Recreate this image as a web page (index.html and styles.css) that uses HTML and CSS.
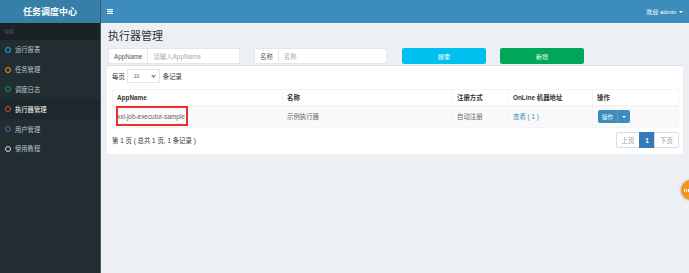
FILE: index.html
```html
<!DOCTYPE html>
<html lang="zh-CN">
<head>
    <meta charset="UTF-8">
    <title>任务调度中心</title>
    <link rel="stylesheet" href="styles.css">
</head>
<body>
    <div class="app">
        <aside class="sidebar">
            <div class="logo">任务调度中心</div>
            <div class="nav-header">导航</div>
            <ul class="menu">
                <li><span class="dot aqua"></span>运行报表</li>
                <li><span class="dot orange"></span>任务管理</li>
                <li><span class="dot green"></span>调度日志</li>
                <li class="active"><span class="dot red"></span>执行器管理</li>
                <li><span class="dot purple"></span>用户管理</li>
                <li><span class="dot gray"></span>使用教程</li>
            </ul>
        </aside>

        <div class="main">
            <header class="navbar">
                <svg class="toggle" width="6" height="5" viewBox="0 0 6 5">
                    <rect x="0" y="0" width="6" height="1.2" fill="#fff"/>
                    <rect x="0" y="1.9" width="6" height="1.2" fill="#fff"/>
                    <rect x="0" y="3.8" width="6" height="1.2" fill="#fff"/>
                </svg>
                <span class="user">欢迎 admin <span class="caret"></span></span>
            </header>

            <section class="content">
                <h1>执行器管理</h1>

                <div class="search-row">
                    <div class="input-group first">
                        <span class="addon">AppName</span>
                        <span class="field">请输入AppName</span>
                    </div>
                    <div class="input-group second">
                        <span class="addon">名称</span>
                        <span class="field">名称</span>
                    </div>
                    <button class="btn btn-search">搜索</button>
                    <button class="btn btn-add">新增</button>
                </div>

                <div class="box">
                    <div class="length">
                        每页
                        <span class="select">10 <span class="chev"></span></span>
                        条记录
                    </div>

                    <table class="grid">
                        <thead>
                            <tr>
                                <th class="c-app">AppName</th>
                                <th class="c-name">名称</th>
                                <th class="c-type">注册方式</th>
                                <th class="c-addr">OnLine 机器地址</th>
                                <th class="c-op">操作</th>
                            </tr>
                        </thead>
                        <tbody>
                            <tr>
                                <td class="app-cell">xxl-job-executor-sample<span class="mark"></span></td>
                                <td>示例执行器</td>
                                <td>自动注册</td>
                                <td><a class="link">查看 ( 1 )</a></td>
                                <td>
                                    <span class="split">
                                        <span class="split-main">操作</span>
                                        <span class="split-caret"><span class="caret"></span></span>
                                    </span>
                                </td>
                            </tr>
                        </tbody>
                    </table>

                    <div class="footer">
                        <span class="info">第 1 页 ( 总共 1 页, 1 条记录 )</span>
                        <ul class="pager">
                            <li>上页</li>
                            <li class="current">1</li>
                            <li>下页</li>
                        </ul>
                    </div>
                </div>
            </section>
        </div>
    </div>

    <div class="float-chat">
        <svg width="6" height="3" viewBox="0 0 6 3">
            <rect x="0" y="0" width="1" height="3" fill="#fff"/>
            <rect x="2" y="0" width="1" height="3" fill="#fff"/>
            <rect x="4" y="0" width="1" height="3" fill="#fff"/>
        </svg>
    </div>
</body>
</html>
```

FILE: styles.css
```css
* {
    box-sizing: border-box;
    margin: 0;
    padding: 0;
}

body {
    width: 689px;
    height: 273px;
    overflow: hidden;
    background: #ecf0f5;
    font-family: "Liberation Sans", "Noto Sans CJK SC", sans-serif;
    font-size: 6.4px;
    color: #333;
    position: relative;
}

.app {
    display: flex;
    height: 273px;
}

/* sidebar */
.sidebar {
    width: 101px;
    flex-shrink: 0;
    background: #222d32;
    border-right: 1px solid #4a5358;
}

.logo {
    height: 23px;
    background: #367fa9;
    color: #fff;
    font-size: 9px;
    font-weight: bold;
    display: flex;
    align-items: center;
    justify-content: center;
}

.nav-header {
    height: 17px;
    line-height: 17px;
    background: #1a2226;
    color: #4b646f;
    font-size: 5px;
    padding-left: 4px;
}

.menu {
    list-style: none;
}

.menu li {
    height: 19.8px;
    display: flex;
    align-items: center;
    gap: 4px;
    padding-left: 5px;
    color: #b8c7ce;
    font-size: 6.3px;
}

.menu li.active {
    background: #1e282c;
    color: #fff;
}

.dot {
    width: 6px;
    height: 6px;
    border: 1.4px solid;
    border-radius: 50%;
}

.aqua { border-color: #00c0ef; }
.orange { border-color: #f39c12; }
.green { border-color: #00a65a; }
.red { border-color: #dd4b39; }
.purple { border-color: #605ca8; }
.gray { border-color: #d2d6de; }

/* main */
.main {
    flex: 1;
    display: flex;
    flex-direction: column;
}

.navbar {
    height: 23px;
    background: #3c8dbc;
    display: flex;
    align-items: center;
    justify-content: space-between;
    padding: 0 7px 0 6px;
    color: #fff;
}

.user {
    font-size: 6px;
}

.caret {
    display: inline-block;
    width: 0;
    height: 0;
    border-left: 2px solid transparent;
    border-right: 2px solid transparent;
    border-top: 2px solid #fff;
    vertical-align: middle;
    margin-left: 1px;
}

.content {
    padding: 6px 7px 0 6px;
}

h1 {
    font-size: 11px;
    font-weight: normal;
    line-height: 15px;
    color: #333;
    padding-left: 1px;
}

/* search */
.search-row {
    display: flex;
    height: 16px;
    margin-top: 4px;
}

.input-group {
    display: flex;
    background: #fff;
    border: 1px solid #e3e6eb;
}

.input-group.first {
    width: 132px;
    margin-left: 1px;
}

.input-group.second {
    width: 133px;
    margin-left: 14px;
}

.addon {
    display: flex;
    align-items: center;
    padding: 0 5px;
    border-right: 1px solid #e3e6eb;
    color: #555;
}

.field {
    display: flex;
    align-items: center;
    padding-left: 5px;
    color: #aaa;
}

.btn {
    width: 84px;
    border: none;
    border-radius: 2px;
    color: #fff;
    font-family: inherit;
    font-size: 6.2px;
}

.btn-search {
    background: #00c0ef;
    margin-left: 15px;
}

.btn-add {
    background: #00a65a;
    margin-left: 14px;
}

/* box */
.box {
    margin-top: 1px;
    background: #fff;
    border-top: 1px solid #dde1e6;
    padding: 3px 4px 6px 5px;
}

.length {
    display: flex;
    align-items: center;
    height: 14px;
    color: #333;
}

.select {
    width: 33px;
    height: 14px;
    margin: 0 3px 0 2px;
    border: 1px solid #e3e6eb;
    display: flex;
    align-items: center;
    justify-content: space-between;
    padding: 0 4px 0 6px;
    font-size: 5px;
    color: #555;
}

.chev {
    width: 3px;
    height: 3px;
    border-right: 1px solid #555;
    border-bottom: 1px solid #555;
    transform: rotate(45deg);
    margin-top: -2px;
}

.grid {
    width: 566px;
    margin-top: 6px;
    border-collapse: collapse;
    table-layout: fixed;
}

.grid th,
.grid td {
    border: 1px solid #f4f4f4;
    text-align: left;
    padding: 0 4px;
    vertical-align: middle;
}

.grid th {
    height: 16px;
    font-weight: bold;
    border-bottom-width: 2px;
}

.grid td {
    height: 22px;
    background: #f9f9f9;
    color: #666;
}

.c-app { width: 170px; }
.c-name { width: 170px; }
.c-type { width: 56px; }
.c-addr { width: 84px; }
.c-op { width: 86px; }

.app-cell {
    position: relative;
}

.mark {
    position: absolute;
    left: 3px;
    top: -1px;
    width: 72px;
    height: 20px;
    border: 2px solid #e8302e;
}

.link {
    color: #3c8dbc;
}

.split {
    display: inline-flex;
    height: 13px;
    border-radius: 2px;
    overflow: hidden;
    background: #3c8dbc;
    color: #fff;
    font-size: 5.5px;
    margin-left: 1px;
}

.split-main {
    display: flex;
    align-items: center;
    padding: 0 4px;
}

.split-caret {
    display: flex;
    align-items: center;
    padding: 0 4px;
    border-left: 1px solid #5aa1cb;
}

.split-caret .caret {
    margin: 0;
}

.footer {
    display: flex;
    justify-content: space-between;
    align-items: center;
    margin-top: 4px;
}

.info {
    color: #333;
}

.pager {
    display: flex;
    list-style: none;
    height: 16px;
}

.pager li {
    display: flex;
    align-items: center;
    justify-content: center;
    width: 24px;
    border: 1px solid #ddd;
    margin-left: -1px;
    color: #999;
    background: #fff;
}

.pager li:first-child {
    border-radius: 2px 0 0 2px;
}

.pager li:last-child {
    width: 25px;
    border-radius: 0 2px 2px 0;
}

.pager li.current {
    width: 16px;
    background: #337ab7;
    border-color: #337ab7;
    color: #fff;
    font-weight: bold;
}

/* floating chat button */
.float-chat {
    position: absolute;
    left: 681px;
    top: 180px;
    width: 20px;
    height: 20px;
    border-radius: 50%;
    background: #f7931e;
    box-shadow: 0 0 3px rgba(0, 0, 0, 0.35);
    display: flex;
    align-items: center;
    padding-left: 3px;
}
```
